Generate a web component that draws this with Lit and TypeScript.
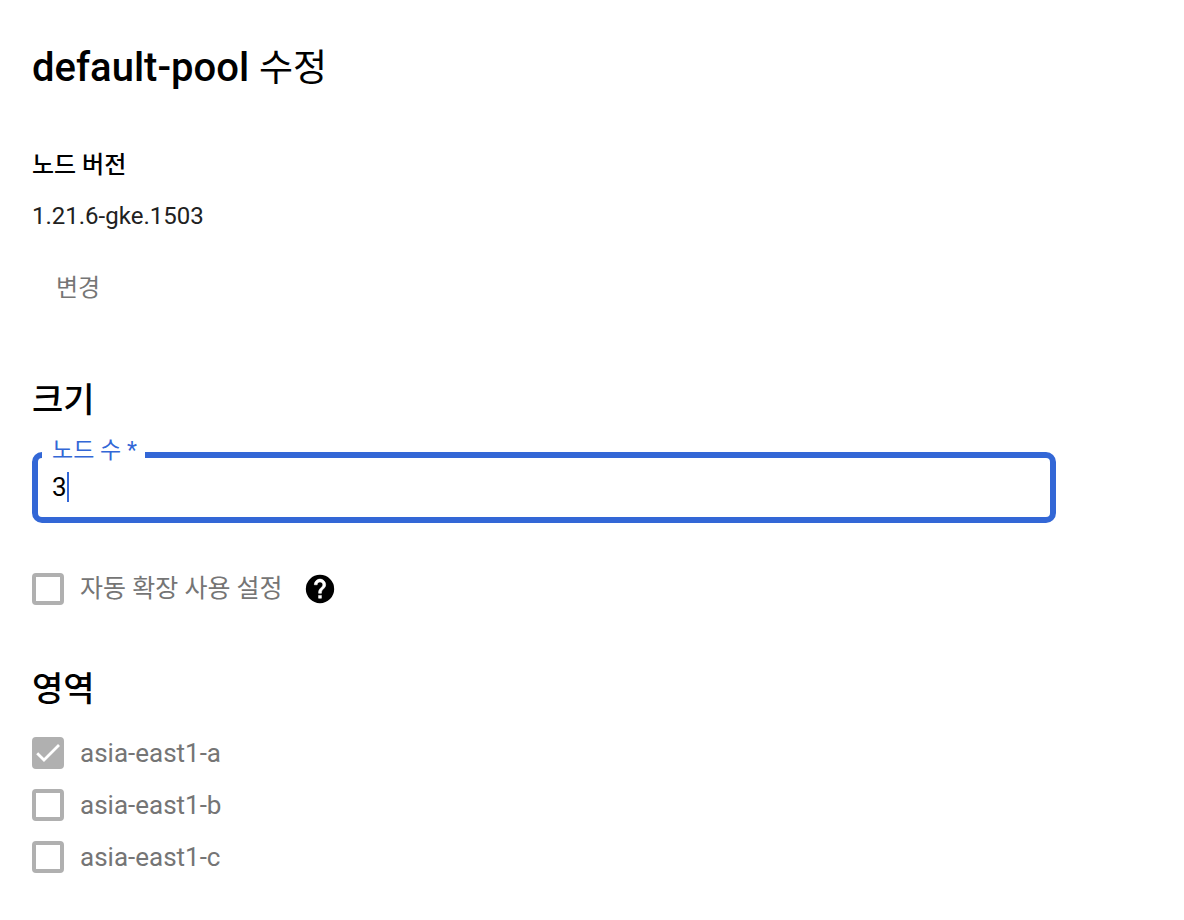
import { LitElement, html, css, nothing } from "lit";
import { customElement, property, state } from "lit/decorators.js";

@customElement("pool-checkbox")
class PoolCheckbox extends LitElement {
  static styles = css`
    :host {
      display: block;
    }
    .row {
      display: flex;
      align-items: center;
      gap: 16px;
      color: #757575;
      line-height: 32px;
    }
    .mark {
      display: grid;
      flex: none;
    }
    .box,
    .tick {
      grid-area: 1 / 1;
      width: 32px;
      height: 32px;
    }
    .box {
      appearance: none;
      box-sizing: border-box;
      margin: 0;
      border: 4px solid #b0b0b0;
      border-radius: 4px;
      background: #fff;
    }
    .box:checked {
      background: #b0b0b0;
    }
    .tick {
      pointer-events: none;
    }
  `;

  @property() label = "";
  @property({ type: Boolean }) checked = false;

  render() {
    return html`<label class="row">
      <span class="mark">
        <input class="box" type="checkbox" .checked=${this.checked} disabled />
        ${this.checked
          ? html`<svg class="tick" viewBox="0 0 32 32" aria-hidden="true">
              <path d="M5.2 16.2 L12 23 L27 8" fill="none" stroke="#fff" stroke-width="2.8" />
            </svg>`
          : nothing}
      </span>
      <span>${this.label}</span>
    </label>`;
  }
}

@customElement("app-root")
class AppRoot extends LitElement {
  static styles = css`
    :host {
      display: block;
      color: #000;
      background: #fff;
      font-family: Roboto, "Noto Sans CJK KR", sans-serif;
    }
    .page {
      padding: 44px 128px 44px 32px;
    }
    h1,
    h2,
    h3,
    p {
      margin: 0;
      font-weight: 500;
    }
    h1 {
      font-size: 40px;
      line-height: 48px;
    }
    .action {
      font-size: 37px;
      font-weight: 400;
    }
    h2 {
      font-size: 34px;
      line-height: 40px;
    }
    h3 {
      margin-top: 56px;
      font-size: 24px;
      line-height: 32px;
    }
    .version {
      margin-top: 19px;
      color: #212121;
      font-size: 24px;
      font-weight: 400;
      line-height: 32px;
    }
    .change {
      display: block;
      margin-top: 40px;
      padding: 0 24px;
      border: 0;
      background: none;
      color: #757575;
      font: 400 24px/32px Roboto, "Noto Sans CJK KR", sans-serif;
    }
    .size {
      margin-top: 76px;
    }
    .field {
      min-width: 0;
      margin: 18px 0 0;
      padding: 0 14px 0 4px;
      border: 6px solid #3367d6;
      border-radius: 10px;
    }
    .legend {
      padding: 0 8px 8px 10px;
      color: #3367d6;
      font-size: 23px;
      line-height: 26px;
    }
    .entry {
      display: flex;
      align-items: center;
      padding: 0 0 15px 10px;
    }
    .count {
      field-sizing: content;
      min-width: 0;
      padding: 0;
      border: 0;
      outline: 0;
      background: none;
      color: #000;
      font: 400 26px/30px Roboto, sans-serif;
    }
    .caret {
      width: 2px;
      height: 30px;
      background: #3367d6;
    }
    .autoscale {
      display: flex;
      align-items: center;
      gap: 20px;
      margin-top: 50px;
      font-size: 25px;
    }
    .help {
      display: flex;
      padding: 0;
      border: 0;
      background: none;
    }
    .help svg {
      width: 34px;
      height: 34px;
      margin: -2px 0;
    }
    .zone-title {
      margin-top: 64px;
    }
    .zones {
      display: grid;
      gap: 20px;
      margin-top: 28px;
      font-size: 26px;
    }
  `;

  @state() private zones = [
    { name: "asia-east1-a", checked: true },
    { name: "asia-east1-b", checked: false },
    { name: "asia-east1-c", checked: false },
  ];

  render() {
    return html`<main class="page">
      <h1>default-pool <span class="action">수정</span></h1>
      <h3>노드 버전</h3>
      <p class="version">1.21.6-gke.1503</p>
      <button class="change" disabled>변경</button>

      <h2 class="size">크기</h2>
      <fieldset class="field">
        <legend class="legend"><label for="count">노드 수 *</label></legend>
        <div class="entry">
          <input id="count" class="count" type="text" inputmode="numeric" value="3" required />
          <span class="caret"></span>
        </div>
      </fieldset>

      <div class="autoscale">
        <pool-checkbox label="자동 확장 사용 설정"></pool-checkbox>
        <button class="help" aria-label="도움말">
          <svg viewBox="0 0 24 24" aria-hidden="true">
            <circle cx="12" cy="12" r="10" />
            <path
              d="M13 18.5h-2v-2h2zM15.07 11.25l-.9.92C13.45 12.9 13 13.5 13 15h-2v-.5c0-1.1.45-2.1 1.17-2.83l1.24-1.26c.37-.36.59-.86.59-1.41 0-1.1-.9-2-2-2s-2 .9-2 2H8c0-2.21 1.79-4 4-4s4 1.79 4 4c0 .88-.36 1.68-.93 2.25z"
              fill="#fff"
              stroke="#fff"
              stroke-width="0.4"
            />
          </svg>
        </button>
      </div>

      <h2 class="zone-title">영역</h2>
      <div class="zones">
        ${this.zones.map(
          (z) => html`<pool-checkbox label=${z.name} ?checked=${z.checked}></pool-checkbox>`
        )}
      </div>
    </main>`;
  }
}
